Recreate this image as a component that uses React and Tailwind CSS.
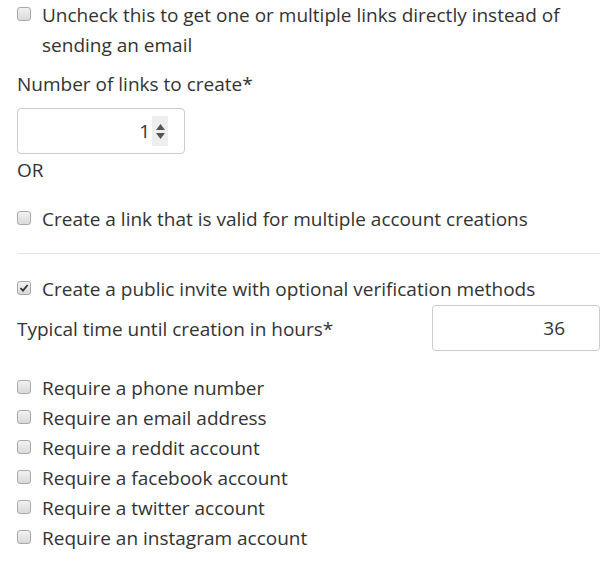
import React, { useState } from 'react';

function Box({ checked }) {
  return (
    <span
      className={`mt-[7px] flex h-[14px] w-[14px] shrink-0 items-center justify-center rounded-[3px] border border-[#a9a9a9] bg-gradient-to-b from-[#f2f2f2] to-[#d9d9d9]`}
    >
      {checked && (
        <svg width="10" height="10" viewBox="0 0 10 10">
          <path d="M1.5 5.2 L4 7.6 L8.6 2" fill="none" stroke="#333" strokeWidth="1.8" />
        </svg>
      )}
    </span>
  );
}

function Check({ checked, onToggle, children, className = '' }) {
  return (
    <label className={`flex cursor-pointer items-start gap-[11px] ${className}`} onClick={onToggle}>
      <Box checked={checked} />
      <span>{children}</span>
    </label>
  );
}

export default function App() {
  const [direct, setDirect] = useState(false);
  const [multi, setMulti] = useState(false);
  const [pub, setPub] = useState(true);
  const [req, setReq] = useState([false, false, false, false, false, false]);
  const requirements = [
    'Require a phone number',
    'Require an email address',
    'Require a reddit account',
    'Require a facebook account',
    'Require a twitter account',
    'Require an instagram account',
  ];

  return (
    <div
      className="min-h-[561px] w-[610px] bg-white pl-[17px] pr-[10px] text-[19px] leading-[30px] text-[#333]"
      style={{ fontFamily: '"Open Sans", "Noto Sans", sans-serif' }}
    >
      <Check checked={direct} onToggle={() => setDirect(!direct)}>
        Uncheck this to get one or multiple links directly instead of sending an email
      </Check>

      <div className="mt-[9px]">Number of links to create*</div>
      <div className="mt-[9px] flex h-[46px] w-[168px] items-center justify-end rounded-[4px] border border-[#ccc] pr-[16px]">
        <span>1</span>
        <span className="ml-[2px] flex h-[30px] w-[16px] flex-col items-center justify-center bg-[#eee] text-[#444]">
          <svg width="9" height="6" viewBox="0 0 9 6"><path d="M0 6 L4.5 0 L9 6 Z" fill="#555" /></svg>
          <svg width="9" height="6" viewBox="0 0 9 6" className="mt-[3px]"><path d="M0 0 L9 0 L4.5 6 Z" fill="#555" /></svg>
        </span>
      </div>
      <div className="mt-[1px]">OR</div>

      <Check className="mt-[19px]" checked={multi} onToggle={() => setMulti(!multi)}>
        Create a link that is valid for multiple account creations
      </Check>

      <hr className="mt-[19px] border-t border-[#e5e5e5]" />

      <Check className="mt-[20px]" checked={pub} onToggle={() => setPub(!pub)}>
        Create a public invite with optional verification methods
      </Check>

      <div className="mt-[1px] flex items-center justify-between">
        <span className="mt-[2px]">Typical time until creation in hours*</span>
        <div className="flex h-[46px] w-[168px] items-center justify-end rounded-[4px] border border-[#ccc] pr-[34px]">
          36
        </div>
      </div>

      <div className="mt-[22px]">
        {requirements.map((r, i) => (
          <Check
            key={r}
            checked={req[i]}
            onToggle={() => setReq(req.map((v, j) => (j === i ? !v : v)))}
          >
            {r}
          </Check>
        ))}
      </div>
    </div>
  );
}
